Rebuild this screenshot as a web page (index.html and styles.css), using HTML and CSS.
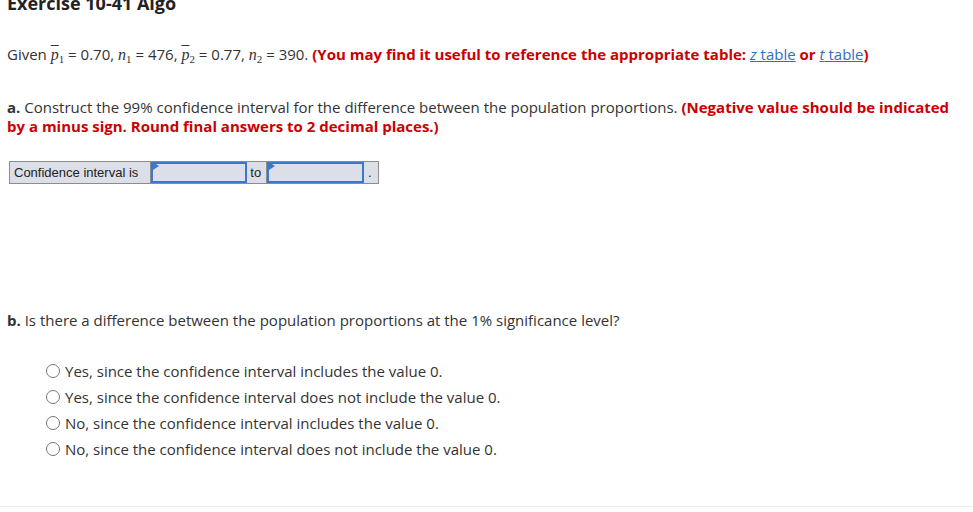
FILE: index.html
```html
<!DOCTYPE html>
<html>
<head>
<meta charset="utf-8">
<link rel="stylesheet" href="styles.css">
</head>
<body>
<div class="page">
  <h1 class="title">Exercise 10-41 Algo</h1>
  <p class="given">Given <span class="m"><span class="bar">p</span><sub>1</sub></span> = 0.70, <span class="m">n<sub>1</sub></span> = 476, <span class="m"><span class="bar">p</span><sub>2</sub></span> = 0.77, <span class="m">n<sub>2</sub></span> = 390. <span class="red">(You may find it useful to reference the appropriate table: <a class="lnk" href="#"><i>z</i> table</a> or <a class="lnk" href="#"><i>t</i> table</a>)</span></p>
  <p class="parta"><b>a.</b> Construct the 99% confidence interval for the difference between the population proportions. <span class="red">(Negative value should be indicated by a minus sign. Round final answers to 2 decimal places.)</span></p>
  <div class="ci">
    <div class="cell lbl">Confidence interval is</div>
    <div class="inp"><span class="flag"></span></div>
    <div class="cell to">to</div>
    <div class="inp"><span class="flag"></span></div>
    <div class="cell dot">.</div>
  </div>
  <p class="partb"><b>b.</b> Is there a difference between the population proportions at the 1% significance level?</p>
  <ul class="opts">
    <li><span class="radio"></span>Yes, since the confidence interval includes the value 0.</li>
    <li><span class="radio"></span>Yes, since the confidence interval does not include the value 0.</li>
    <li><span class="radio"></span>No, since the confidence interval includes the value 0.</li>
    <li><span class="radio"></span>No, since the confidence interval does not include the value 0.</li>
  </ul>
</div>
<div class="rule"></div>
</body>
</html>
```
FILE: styles.css
```css
html, body { margin: 0; padding: 0; background: #fff; }
body { width: 973px; height: 512px; overflow: hidden; position: relative; font-family: "Open Sans", "Liberation Sans", sans-serif; color: #333; }
.page { padding: 0 7px; display: flow-root; }
.title { margin: -8px 0 0 0; height: 22px; font-size: 18px; line-height: 22px; font-weight: 700; color: #222; }
.given { margin: 30px 0 0 0; font-size: 15px; line-height: 20px; height: 20px; }
.red { color: #c00; font-weight: 700; }
.lnk { color: #2f6fc4; font-weight: 400; text-decoration: underline; }
.m { font-family: "Liberation Serif", serif; font-style: italic; font-size: 16px; line-height: 16px; }
.m sub { font-style: normal; font-size: 11px; line-height: 11px; vertical-align: -3px; }
.bar { text-decoration: overline; }
.parta { margin: 34px 0 0 0; font-size: 15px; line-height: 19px; }
.ci { display: flex; margin: 25px 0 0 2px; width: 370px; height: 23px; border: 1px solid #8c8c8c; background: #dcdfe7; box-sizing: border-box; font-family: "Liberation Sans", Arial, sans-serif; font-size: 13px; color: #222; }
.cell { display: flex; align-items: center; padding: 0 4px; border-right: 1px solid #8c8c8c; }
.lbl { width: 141px; box-sizing: border-box; }
.to { width: 20px; box-sizing: border-box; padding: 0 3px; }
.dot { border-right: 0; width: 14px; box-sizing: border-box; }
.inp { position: relative; width: 97px; box-sizing: border-box; border: 2px solid #3a78cf; background: #dcdfe7; }
.flag { position: absolute; top: -2px; left: 0; width: 0; height: 0; border-top: 4px solid transparent; border-bottom: 4px solid transparent; border-left: 6px solid #3a78cf; }
.partb { margin: 126px 0 0 0; font-size: 15px; line-height: 20px; }
.opts { list-style: none; margin: 28px 0 0 39px; padding: 0; font-size: 15px; }
.opts li { display: flex; align-items: center; height: 26px; }
.radio { width: 14px; height: 14px; border: 1px solid #777; border-radius: 50%; box-sizing: border-box; margin-right: 5px; flex: none; }
.rule { position: absolute; left: 0; right: 0; top: 506px; height: 1px; background: #eceef0; }
```
